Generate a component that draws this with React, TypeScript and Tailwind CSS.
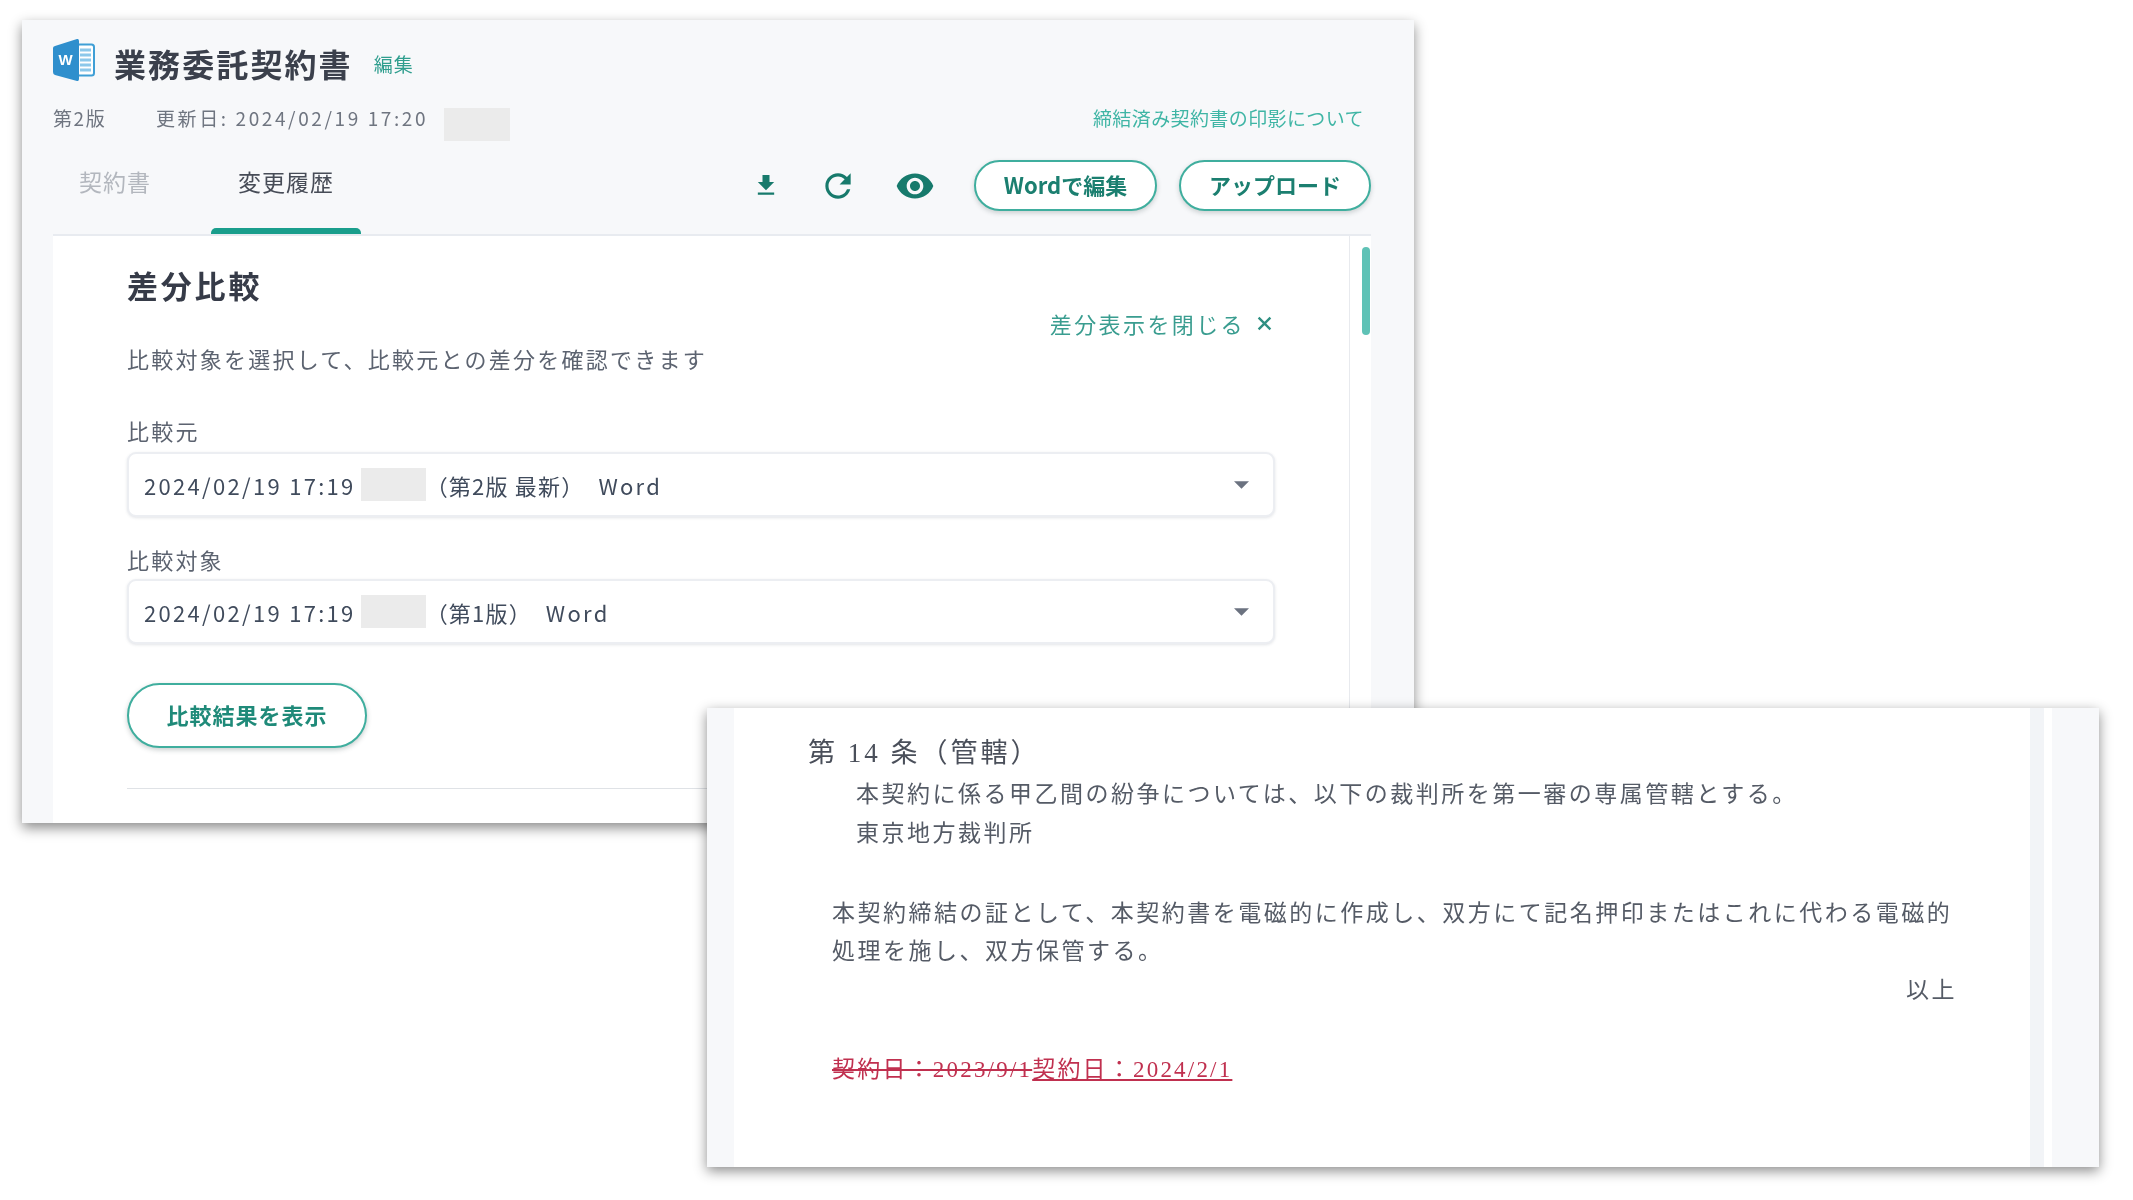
const SANS = "font-['Noto_Sans_CJK_JP',sans-serif]";

function WordIcon() {
  return (
    <svg width="42" height="44" viewBox="0 0 42 44" className="shrink-0">
      <rect x="24" y="6.5" width="17" height="31" rx="2.5" fill="#ffffff" stroke="#3f9fd6" strokeWidth="2" />
      <path d="M27 12h11M27 17h11M27 22h11M27 27h11M27 32h11" stroke="#8cc8ea" strokeWidth="3" />
      <path d="M2 8 L24 1 Q26 0.5 26 3 L26 41 Q26 43.5 24 43 L2 37 Q0 36.5 0 34 L0 10 Q0 8.5 2 8 Z" fill="#2f8fcd" />
      <text x="12.5" y="27" textAnchor="middle" fontSize="15" fontWeight="700" fill="#ffffff" fontFamily="Liberation Sans, sans-serif">W</text>
    </svg>
  );
}

function MIcon({ d, w, h, box }: { d: string; w: number; h: number; box?: string }) {
  return (
    <svg width={w} height={h} viewBox={box ?? "0 0 24 24"} fill="#177a6c">
      <path d={d} />
    </svg>
  );
}

function Caret() {
  return (
    <svg width="15" height="8" viewBox="0 0 16 8" className="shrink-0">
      <path d="M0 0h16L8 8z" fill="#6b7280" />
    </svg>
  );
}

function SelectBox({ children }: { children: React.ReactNode }) {
  return (
    <div className="flex items-center h-[65px] w-[1148px] pl-[15px] pr-[24px] rounded-[9px] border-2 border-[#eceef2] bg-white shadow-[0_1px_3px_rgba(60,70,90,0.14)]">
      <span className="text-[22px] leading-[30px] tracking-[2.3px] text-[#404b5c] whitespace-nowrap">2024/02/19 17:19</span>
      <span className="w-[65px] h-[33px] ml-[5px] bg-[#ebebeb] shrink-0" />
      {children}
      <span className="ml-auto flex"><Caret /></span>
    </div>
  );
}

function PillButton({ label, w, h }: { label: string; w: string; h: string }) {
  return (
    <button className={`${w} ${h} shrink-0 rounded-full border-2 border-[#3fae9e] bg-white pb-[3px] text-[22px] font-bold text-[#1b7f70] shadow-[0_2px_5px_rgba(40,60,60,0.22)] leading-none`}>
      {label}
    </button>
  );
}

export default function App() {
  return (
    <div className={`relative w-[2133px] h-[1200px] bg-white overflow-hidden pt-[20px] pl-[22px] blur-[0.6px] ${SANS}`}>
      <div className="w-[1392px] h-[803px] bg-[#f7f8fa] shadow-[0_5px_12px_rgba(0,0,0,0.45)] pl-[31px] pr-[43px] flex flex-col">
        <div className="flex items-center h-[44px] mt-[18px]">
          <WordIcon />
          <h1 className="ml-[19px] mt-[6px] text-[32px] leading-[44px] font-bold tracking-[2.1px] text-[#3b404c] whitespace-nowrap">業務委託契約書</h1>
          <span className="ml-[21px] mt-[8px] text-[19px] tracking-[1px] text-[#2f9e8e]">編集</span>
        </div>
        <div className="flex items-start h-[33px] mt-[26px] pr-[7px] text-[#6f7580] text-[19px] leading-[20px]">
          <span className="tracking-[1.6px] w-[103px] shrink-0">第2版</span>
          <span className="tracking-[2.6px] whitespace-nowrap">更新日: 2024/02/19 17:20</span>
          <span className="ml-[16px] w-[66px] h-[33px] bg-[#ebebeb]" />
          <span className="ml-auto text-[#3fb5a5] tracking-[0.4px] whitespace-nowrap">締結済み契約書の印影について</span>
        </div>
        <div className="flex h-[94px]">
          <div className="flex h-full">
            <div className="w-[124px] pt-[26px] text-center text-[23px] leading-[28px] tracking-[1px] text-[#b3b7be]">契約書</div>
            <div className="ml-[34px] w-[150px] h-full flex flex-col items-center">
              <div className="pt-[26px] text-[23px] leading-[28px] tracking-[1px] text-[#474c57]">変更履歴</div>
              <div className="mt-auto mb-[1px] w-full h-[6px] rounded-t-[5px] bg-[#1a9e8c]" />
            </div>
          </div>
          <div className="ml-auto flex items-start pt-[19px]">
            <div className="h-[51px] w-[28px] flex items-center justify-center mr-[39px]">
              <MIcon w={29} h={29} d="M19 9h-4V3H9v6H5l7 7 7-7zM5 18v2h14v-2H5z" />
            </div>
            <div className="h-[51px] w-[38px] flex items-center justify-center mr-[38px]">
              <MIcon w={38} h={38} d="M17.65 6.35C16.2 4.9 14.21 4 12 4c-4.42 0-7.99 3.58-7.99 8s3.57 8 7.99 8c3.73 0 6.84-2.55 7.73-6h-2.08c-.82 2.33-3.04 4-5.65 4-3.31 0-6-2.69-6-6s2.69-6 6-6c1.66 0 3.14.69 4.22 1.78L13 11h7V4l-2.35 2.35z" />
            </div>
            <div className="h-[51px] w-[40px] flex items-center justify-center mr-[39px]">
              <MIcon w={40} h={40} d="M12 4.5C7 4.5 2.73 7.61 1 12c1.73 4.39 6 7.5 11 7.5s9.27-3.11 11-7.5c-1.73-4.39-6-7.5-11-7.5zM12 17c-2.76 0-5-2.24-5-5s2.24-5 5-5 5 2.24 5 5-2.24 5-5 5zm0-8c-1.66 0-3 1.34-3 3s1.34 3 3 3 3-1.34 3-3-1.34-3-3-3z" />
            </div>
            <PillButton label="Wordで編集" w="w-[183px]" h="h-[51px]" />
            <div className="w-[22px]" />
            <PillButton label="アップロード" w="w-[192px]" h="h-[51px]" />
          </div>
        </div>
        <div className="h-[2px] bg-[#e8ebf0] -mt-[1px]" />
        <div className="flex flex-1 min-h-0 bg-white overflow-hidden">
          <div className="w-[1297px] pl-[74px] pt-[29px] border-r border-[#e8eaee] shrink-0">
            <h2 className="text-[31px] leading-[40px] font-bold tracking-[2.8px] text-[#363b48]">差分比較</h2>
            <div className="w-[1148px] h-[36px] flex items-center justify-end pr-[3px] text-[#3a9d90]">
              <span className="text-[22px] leading-[28px] tracking-[2.4px]">差分表示を閉じる</span>
              <span className="ml-[12px] flex">
                <svg width="15" height="15" viewBox="0 0 14 14"><path d="M1.5 1.5l11 11M12.5 1.5l-11 11" stroke="#2f8f82" strokeWidth="2.2" /></svg>
              </span>
            </div>
            <p className="mt-[3px] text-[22px] leading-[28px] tracking-[2.25px] text-[#5c6370] whitespace-nowrap">比較対象を選択して、比較元との差分を確認できます</p>
            <div className="mt-[44px] text-[22px] leading-[28px] tracking-[2.2px] text-[#5c6370]">比較元</div>
            <div className="mt-[8px]">
              <SelectBox>
                <span className="text-[22px] leading-[30px] tracking-[1.2px] text-[#404b5c] whitespace-pre">（第2版 最新）</span>
                <span className="ml-[14px] text-[22px] leading-[30px] tracking-[2.3px] text-[#404b5c]">Word</span>
              </SelectBox>
            </div>
            <div className="mt-[28px] text-[22px] leading-[28px] tracking-[2.2px] text-[#5c6370]">比較対象</div>
            <div className="mt-[6px]">
              <SelectBox>
                <span className="text-[22px] leading-[30px] tracking-[1.2px] text-[#404b5c] whitespace-pre">（第1版）</span>
                <span className="ml-[14px] text-[22px] leading-[30px] tracking-[2.3px] text-[#404b5c]">Word</span>
              </SelectBox>
            </div>
            <button className="mt-[39px] block w-[240px] h-[65px] rounded-full border-2 border-[#3fae9e] bg-white pb-[2px] text-[22px] font-bold tracking-[1px] text-[#1f8a79] shadow-[0_2px_5px_rgba(40,60,60,0.25)]">比較結果を表示</button>
            <div className="mt-[40px] w-[1148px] h-[1px] bg-[#dfe2e6]" />
          </div>
          <div className="flex-1 pt-[11px] pl-[12px]">
            <div className="w-[8px] h-[88px] rounded-full bg-[#5fc2b6]" />
          </div>
        </div>
      </div>

      <div className="absolute left-[707px] top-[708px] w-[1392px] h-[459px] flex bg-white shadow-[0_4px_12px_rgba(0,0,0,0.45)] font-['Liberation_Serif','Noto_Sans_CJK_JP',sans-serif] text-[#555b66]">
        <div className="w-[27px] bg-[#f7f8fa] shrink-0" />
        <div className="w-[1296px] pt-[27px] pl-[98px] text-[23px] tracking-[2.5px]">
          <div className="-ml-[24px] h-[36px] leading-[36px] text-[27px] tracking-[3px] text-[#4a4f5a] whitespace-pre">第 14 条（管轄）</div>
          <div className="pl-[24px] mt-[4px] h-[39px] leading-[39px] whitespace-nowrap">本契約に係る甲乙間の紛争については、以下の裁判所を第一審の専属管轄とする。</div>
          <div className="pl-[24px] h-[40px] leading-[40px] whitespace-nowrap">東京地方裁判所</div>
          <div className="mt-[41px] h-[38px] leading-[38px] whitespace-nowrap">本契約締結の証として、本契約書を電磁的に作成し、双方にて記名押印またはこれに代わる電磁的</div>
          <div className="h-[38px] leading-[38px] whitespace-nowrap">処理を施し、双方保管する。</div>
          <div className="w-[1125px] text-right h-[40px] leading-[40px]">以上</div>
          <div className="mt-[40px] h-[38px] leading-[38px] tracking-[2.2px] text-[#c0304f] whitespace-nowrap">
            <span className="line-through">契約日：2023/9/1</span>
            <span className="underline">契約日：2024/2/1</span>
          </div>
        </div>
        <div className="w-[14px] bg-[#f2f4f7] shrink-0" />
        <div className="w-[8px] shrink-0" />
        <div className="flex-1 bg-[#f7f8fa]" />
      </div>
    </div>
  );
}
